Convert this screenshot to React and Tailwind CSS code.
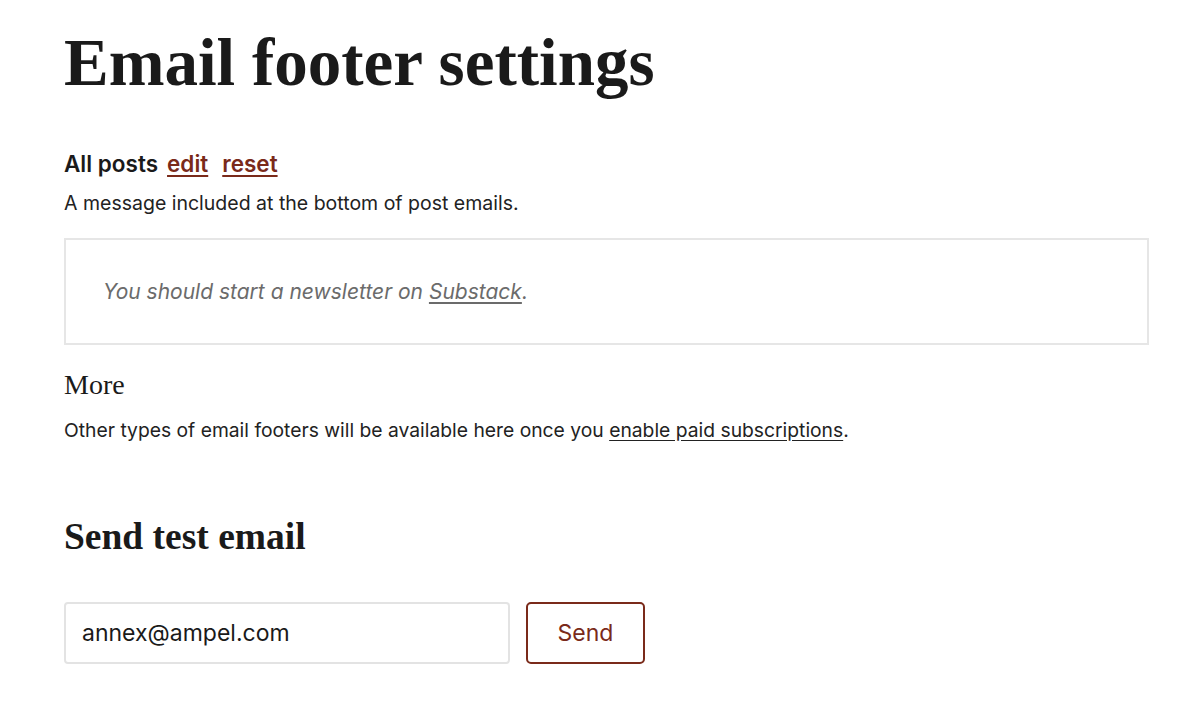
export default function App() {
  return (
    <div className="min-h-[713px] bg-white px-16 pt-[22px] text-[#1a1a1a] font-['Inter','Noto_Sans',sans-serif]">
      <div className="w-[1085px]">
        <h1 className="font-['Liberation_Serif',serif] font-bold text-[67px] leading-[80px]">
          Email footer settings
        </h1>

        <div className="mt-[48px] flex items-baseline gap-[9px] text-[22.5px] font-semibold leading-[28px]">
          <span>All posts</span>
          <a href="#" className="text-[#7a2a1a] underline underline-offset-[3px] decoration-2">edit</a>
          <a href="#" className="ml-[5px] text-[#7a2a1a] underline underline-offset-[3px] decoration-2">reset</a>
        </div>
        <p className="mt-[12px] text-[19.5px] leading-[26px] text-[#222]">
          A message included at the bottom of post emails.
        </p>

        <div className="mt-[22px] h-[107px] border-2 border-[#e6e6e6] flex items-center px-[37px]">
          <p className="italic text-[21px] text-[#6b6b6b]">
            You should start a newsletter on <a href="#" className="underline underline-offset-[3px]">Substack</a>.
          </p>
        </div>

        <h3 className="mt-[24px] font-['Liberation_Serif',serif] text-[28px] leading-[32px] font-normal">More</h3>
        <p className="mt-[16px] text-[19.3px] leading-[26px] text-[#222]">
          Other types of email footers will be available here once you{' '}
          <a href="#" className="underline underline-offset-[3px]">enable paid subscriptions</a>.
        </p>

        <h2 className="mt-[72px] font-['Liberation_Serif',serif] font-bold text-[37.5px] leading-[44px]">
          Send test email
        </h2>

        <div className="mt-[43px] flex gap-4">
          <input
            defaultValue="annex@ampel.com"
            className="w-[446px] h-[62px] border-2 border-[#e3e3e3] rounded-[4px] px-4 text-[23px] text-[#1a1a1a] outline-none"
          />
          <button className="w-[119px] h-[62px] border-2 border-[#7a2a1a] rounded-[5px] text-[23px] text-[#7a2a1a]">
            Send
          </button>
        </div>
      </div>
    </div>
  );
}
